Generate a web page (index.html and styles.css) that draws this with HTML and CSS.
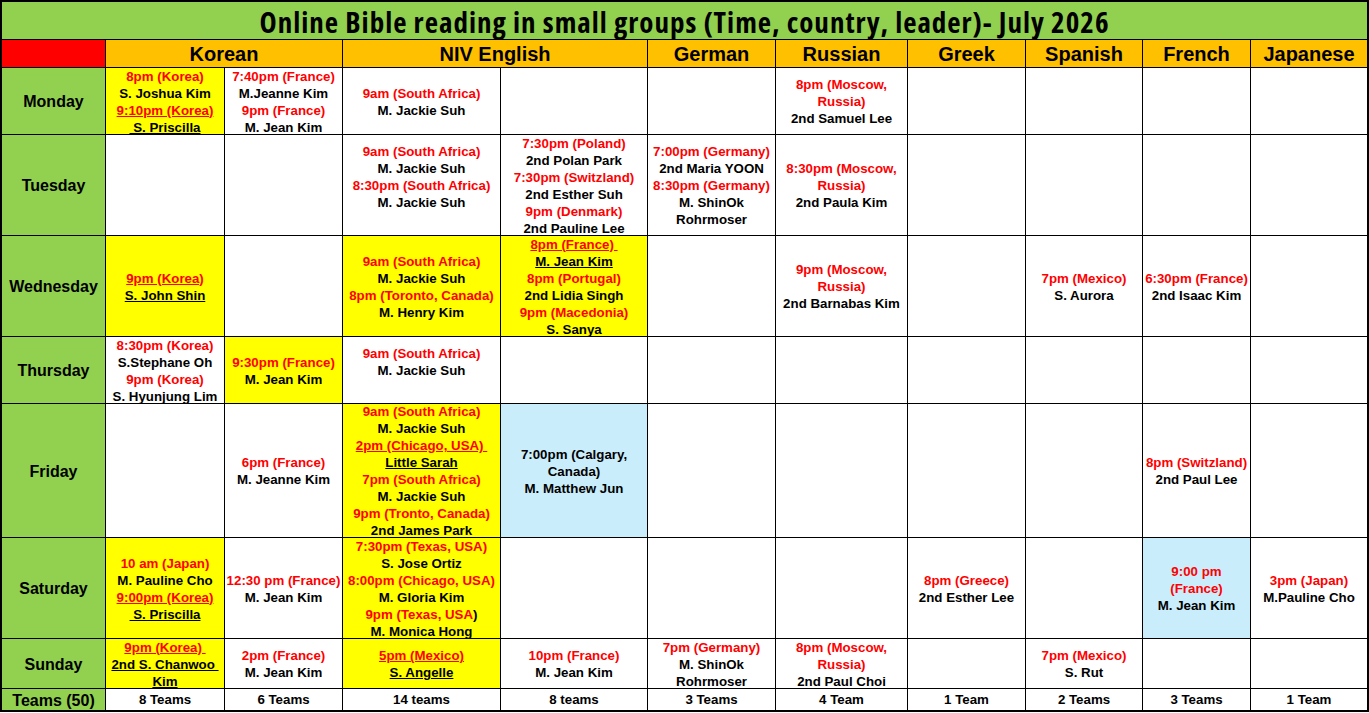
FILE: index.html
```html
<!DOCTYPE html>
<html lang="en">
<head>
<meta charset="utf-8">
<title>Online Bible reading in small groups - July 2026</title>
<link rel="stylesheet" href="styles.css">
</head>
<body>
<div class="sheet">
  <div class="title"><span class="title-text">Online Bible reading in small groups (Time, country, leader)- July 2026</span></div>

  <div class="hd red-bg"></div>
  <div class="hd span2">Korean</div>
  <div class="hd span2">NIV English</div>
  <div class="hd">German</div>
  <div class="hd">Russian</div>
  <div class="hd">Greek</div>
  <div class="hd">Spanish</div>
  <div class="hd">French</div>
  <div class="hd">Japanese</div>

  <!-- Monday -->
  <div class="day">Monday</div>
  <div class="cell y"><span class="ln r">8pm (Korea)</span><span class="ln">S. Joshua Kim</span><span class="ln r u">9:10pm (Korea)</span><span class="ln u"> S. Priscilla</span></div>
  <div class="cell"><span class="ln r">7:40pm (France)</span><span class="ln">M.Jeanne Kim</span><span class="ln r">9pm (France)</span><span class="ln">M. Jean Kim</span></div>
  <div class="cell"><span class="ln r">9am (South Africa)</span><span class="ln">M. Jackie Suh</span></div>
  <div class="cell"></div>
  <div class="cell"></div>
  <div class="cell"><span class="ln r">8pm (Moscow,</span><span class="ln r">Russia)</span><span class="ln">2nd Samuel Lee</span></div>
  <div class="cell"></div>
  <div class="cell"></div>
  <div class="cell"></div>
  <div class="cell"></div>

  <!-- Tuesday -->
  <div class="day">Tuesday</div>
  <div class="cell"></div>
  <div class="cell"></div>
  <div class="cell"><span class="ln r">9am (South Africa)</span><span class="ln">M. Jackie Suh</span><span class="ln r">8:30pm (South Africa)</span><span class="ln">M. Jackie Suh</span><span class="ln"> </span></div>
  <div class="cell"><span class="ln r">7:30pm (Poland)</span><span class="ln">2nd Polan Park</span><span class="ln r">7:30pm (Switzland)</span><span class="ln">2nd Esther Suh</span><span class="ln r">9pm (Denmark)</span><span class="ln">2nd Pauline Lee</span></div>
  <div class="cell"><span class="ln r">7:00pm (Germany)</span><span class="ln">2nd Maria YOON</span><span class="ln r">8:30pm (Germany)</span><span class="ln">M. ShinOk</span><span class="ln">Rohrmoser</span></div>
  <div class="cell"><span class="ln r">8:30pm (Moscow,</span><span class="ln r">Russia)</span><span class="ln">2nd Paula Kim</span></div>
  <div class="cell"></div>
  <div class="cell"></div>
  <div class="cell"></div>
  <div class="cell"></div>

  <!-- Wednesday -->
  <div class="day">Wednesday</div>
  <div class="cell y"><span class="ln r u">9pm (Korea)</span><span class="ln u">S. John Shin</span></div>
  <div class="cell"></div>
  <div class="cell y"><span class="ln r">9am (South Africa)</span><span class="ln">M. Jackie Suh</span><span class="ln r">8pm (Toronto, Canada)</span><span class="ln">M. Henry Kim</span></div>
  <div class="cell y"><span class="ln r u">8pm (France) </span><span class="ln u">M. Jean Kim</span><span class="ln r">8pm (Portugal)</span><span class="ln">2nd Lidia Singh</span><span class="ln r">9pm (Macedonia)</span><span class="ln">S. Sanya</span></div>
  <div class="cell"></div>
  <div class="cell"><span class="ln r">9pm (Moscow,</span><span class="ln r">Russia)</span><span class="ln">2nd Barnabas Kim</span></div>
  <div class="cell"></div>
  <div class="cell"><span class="ln r">7pm (Mexico)</span><span class="ln">S. Aurora</span></div>
  <div class="cell"><span class="ln r">6:30pm (France)</span><span class="ln">2nd Isaac Kim</span></div>
  <div class="cell"></div>

  <!-- Thursday -->
  <div class="day">Thursday</div>
  <div class="cell"><span class="ln r">8:30pm (Korea)</span><span class="ln">S.Stephane Oh</span><span class="ln r">9pm (Korea)</span><span class="ln">S. Hyunjung Lim</span></div>
  <div class="cell y"><span class="ln r">9:30pm (France)</span><span class="ln">M. Jean Kim</span></div>
  <div class="cell"><span class="ln r">9am (South Africa)</span><span class="ln">M. Jackie Suh</span><span class="ln"> </span></div>
  <div class="cell"></div>
  <div class="cell"></div>
  <div class="cell"></div>
  <div class="cell"></div>
  <div class="cell"></div>
  <div class="cell"></div>
  <div class="cell"></div>

  <!-- Friday -->
  <div class="day">Friday</div>
  <div class="cell"></div>
  <div class="cell"><span class="ln r">6pm (France)</span><span class="ln">M. Jeanne Kim</span></div>
  <div class="cell y"><span class="ln r">9am (South Africa)</span><span class="ln">M. Jackie Suh</span><span class="ln r u">2pm (Chicago, USA) </span><span class="ln u">Little Sarah</span><span class="ln r">7pm (South Africa)</span><span class="ln">M. Jackie Suh</span><span class="ln r">9pm (Tronto, Canada)</span><span class="ln">2nd James Park</span></div>
  <div class="cell b"><span class="ln">7:00pm (Calgary,</span><span class="ln">Canada)</span><span class="ln">M. Matthew Jun</span></div>
  <div class="cell"></div>
  <div class="cell"></div>
  <div class="cell"></div>
  <div class="cell"></div>
  <div class="cell"><span class="ln r">8pm (Switzland)</span><span class="ln">2nd Paul Lee</span></div>
  <div class="cell"></div>

  <!-- Saturday -->
  <div class="day">Saturday</div>
  <div class="cell y"><span class="ln r">10 am (Japan)</span><span class="ln">M. Pauline Cho</span><span class="ln r u">9:00pm (Korea)</span><span class="ln u"> S. Priscilla</span></div>
  <div class="cell"><span class="ln r">12:30 pm (France)</span><span class="ln">M. Jean Kim</span></div>
  <div class="cell y"><span class="ln r">7:30pm (Texas, USA)</span><span class="ln">S. Jose Ortiz</span><span class="ln r">8:00pm (Chicago, USA)</span><span class="ln">M. Gloria Kim</span><span class="ln"><span class="r">9pm (Texas, USA</span>)</span><span class="ln">M. Monica Hong</span></div>
  <div class="cell"></div>
  <div class="cell"></div>
  <div class="cell"></div>
  <div class="cell"><span class="ln r">8pm (Greece)</span><span class="ln">2nd Esther Lee</span></div>
  <div class="cell"></div>
  <div class="cell b"><span class="ln r">9:00 pm</span><span class="ln r">(France)</span><span class="ln">M. Jean Kim</span></div>
  <div class="cell"><span class="ln r">3pm (Japan)</span><span class="ln">M.Pauline Cho</span></div>

  <!-- Sunday -->
  <div class="day">Sunday</div>
  <div class="cell y"><span class="ln r u">9pm (Korea) </span><span class="ln u">2nd S. Chanwoo </span><span class="ln u">Kim</span></div>
  <div class="cell"><span class="ln r">2pm (France)</span><span class="ln">M. Jean Kim</span></div>
  <div class="cell y"><span class="ln r u">5pm (Mexico)</span><span class="ln u">S. Angelle</span></div>
  <div class="cell"><span class="ln r">10pm (France)</span><span class="ln">M. Jean Kim</span></div>
  <div class="cell"><span class="ln r">7pm (Germany)</span><span class="ln">M. ShinOk</span><span class="ln">Rohrmoser</span></div>
  <div class="cell"><span class="ln r">8pm (Moscow,</span><span class="ln r">Russia)</span><span class="ln">2nd Paul Choi</span></div>
  <div class="cell"></div>
  <div class="cell"><span class="ln r">7pm (Mexico)</span><span class="ln">S. Rut</span></div>
  <div class="cell"></div>
  <div class="cell"></div>

  <!-- Teams -->
  <div class="day">Teams (50)</div>
  <div class="cell tm">8 Teams</div>
  <div class="cell tm">6 Teams</div>
  <div class="cell tm">14 teams</div>
  <div class="cell tm">8 teams</div>
  <div class="cell tm">3 Teams</div>
  <div class="cell tm">4 Team</div>
  <div class="cell tm">1 Team</div>
  <div class="cell tm">2 Teams</div>
  <div class="cell tm">3 Teams</div>
  <div class="cell tm">1 Team</div>
</div>
</body>
</html>
```
FILE: styles.css
```css
html, body {
  margin: 0;
  padding: 0;
  background: #ffffff;
}

.sheet {
  display: grid;
  grid-template-columns: 103px 118px 117px 157px 146px 127px 131px 117px 116px 107px 116px;
  grid-template-rows: 37px 27px 66px 100px 100px 66px 133px 100px 49px 21px;
  gap: 1px;
  padding: 2px;
  width: 1369px;
  box-sizing: border-box;
  background: #000000;
  font-family: "Liberation Sans", Arial, sans-serif;
  font-weight: bold;
  color: #000000;
}

.title {
  grid-column: 1 / -1;
  background: #92d050;
  display: flex;
  align-items: center;
  justify-content: center;
  overflow: hidden;
}

.title-text {
  font-family: "Open Sans", "Noto Sans", sans-serif;
  font-weight: 700;
  font-stretch: 80%;
  font-size: 29px;
  letter-spacing: 1px;
  line-height: 37px;
  padding-top: 1px;
  white-space: nowrap;
}

.hd {
  background: #ffc000;
  font-size: 20px;
  line-height: 27px;
  padding-top: 1px;
  box-sizing: border-box;
  display: flex;
  align-items: center;
  justify-content: center;
  white-space: nowrap;
}

.red-bg {
  background: #ff0000;
}

.span2 {
  grid-column: span 2;
}

.day {
  background: #92d050;
  font-size: 16px;
  padding-top: 2px;
  box-sizing: border-box;
  display: flex;
  align-items: center;
  justify-content: center;
  white-space: nowrap;
}

.cell {
  background: #ffffff;
  display: flex;
  flex-direction: column;
  justify-content: center;
  align-items: center;
  text-align: center;
  overflow: hidden;
  padding-top: 1px;
  box-sizing: border-box;
  font-size: 13.3px;
  line-height: 17px;
}

.ln {
  display: block;
  white-space: pre;
}

.r {
  color: #ff0000;
}

.u {
  text-decoration: underline;
}

.y {
  background: #ffff00;
}

.b {
  background: #caedfb;
}

.tm {
  line-height: 21px;
  padding-top: 0;
}
```
